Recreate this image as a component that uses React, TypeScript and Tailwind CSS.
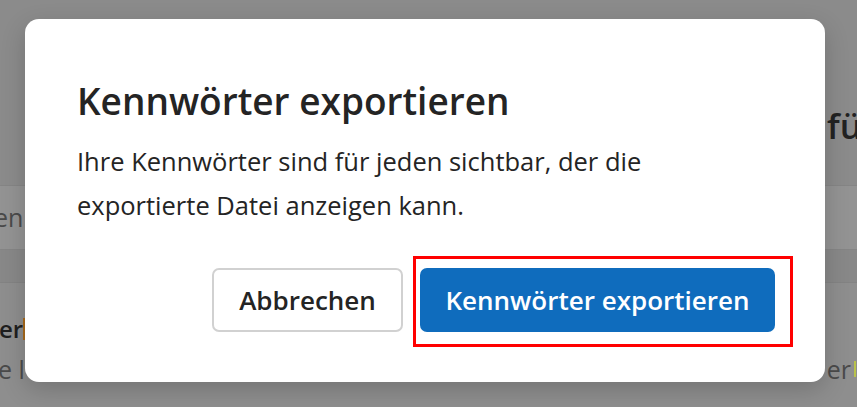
import React from "react";

export default function App() {
  const font = { fontFamily: '"Open Sans", "Noto Sans", sans-serif' };
  return (
    <div
      className="relative w-[857px] h-[407px] overflow-hidden bg-[#8b8b8b]"
      style={font}
    >
      {/* dimmed page behind the dialog */}
      <div className="flex flex-col w-full h-full">
        <div className="h-[185px] flex flex-col">
          <div className="h-[102px]" />
          <div className="whitespace-nowrap pl-[827px] text-[35px] font-semibold leading-[48px] text-[#222]">
            fügen
          </div>
        </div>
        <div className="h-[65px] border-y border-[#858585] bg-[#939393] flex items-center">
          <span className="-ml-[6px] text-[25px] text-[#4a4a4a] whitespace-nowrap">
            en
          </span>
        </div>
        <div className="h-[33px] bg-[#888888] border-b border-[#838383]" />
        <div className="flex-1 bg-[#8e8e8e] flex">
          <div className="flex flex-col pt-[32px]">
            <div className="flex items-center h-[28px]">
              <span className="-ml-[1px] text-[24px] font-semibold text-[#1f1f1f] leading-[28px]">
                er
              </span>
              <span className="w-[3px] h-[22px] bg-[#a86a1c]" />
            </div>
            <div className="mt-[12px] -ml-[2px] text-[25px] text-[#4a4a4a] leading-[28px] whitespace-nowrap">
              e l
            </div>
          </div>
          <div className="flex-1" />
          <div className="flex flex-col pt-[72px] pr-[1px]">
            <div className="flex items-center h-[28px]">
              <span className="text-[25px] text-[#4a4a4a] leading-[28px]">er</span>
              <span className="ml-[3px] w-[2px] h-[16px] bg-[#b8c24a]" />
            </div>
          </div>
        </div>
      </div>

      {/* dialog */}
      <div className="absolute left-[25px] top-[19px] w-[800px] h-[363px] rounded-[14px] bg-white shadow-[0_8px_24px_rgba(0,0,0,0.18)] flex flex-col pl-[52px] pr-[50px] pt-[58px]">
        <h1 className="text-[37px] leading-[48px] font-semibold text-[#242424]">
          Kennwörter exportieren
        </h1>
        <p className="mt-[14px] text-[25.5px] leading-[44px] text-[#242424] w-[610px]">
          Ihre Kennwörter sind für jeden sichtbar, der die exportierte Datei
          anzeigen kann.
        </p>
        <div className="mt-[41px] flex justify-end gap-[17px]">
          <button className="w-[191px] h-[64px] rounded-[7px] border-2 border-[#d1d1d1] bg-white text-[26px] font-semibold text-[#242424]">
            Abbrechen
          </button>
          <div className="relative">
            <button className="w-[355px] h-[64px] rounded-[7px] bg-[#0f6cbd] text-[26px] font-semibold text-white">
              Kennwörter exportieren
            </button>
            <div className="absolute left-[-7px] top-[-12px] w-[380px] h-[91px] border-[3px] border-[#ff0000] pointer-events-none" />
          </div>
        </div>
      </div>
    </div>
  );
}
